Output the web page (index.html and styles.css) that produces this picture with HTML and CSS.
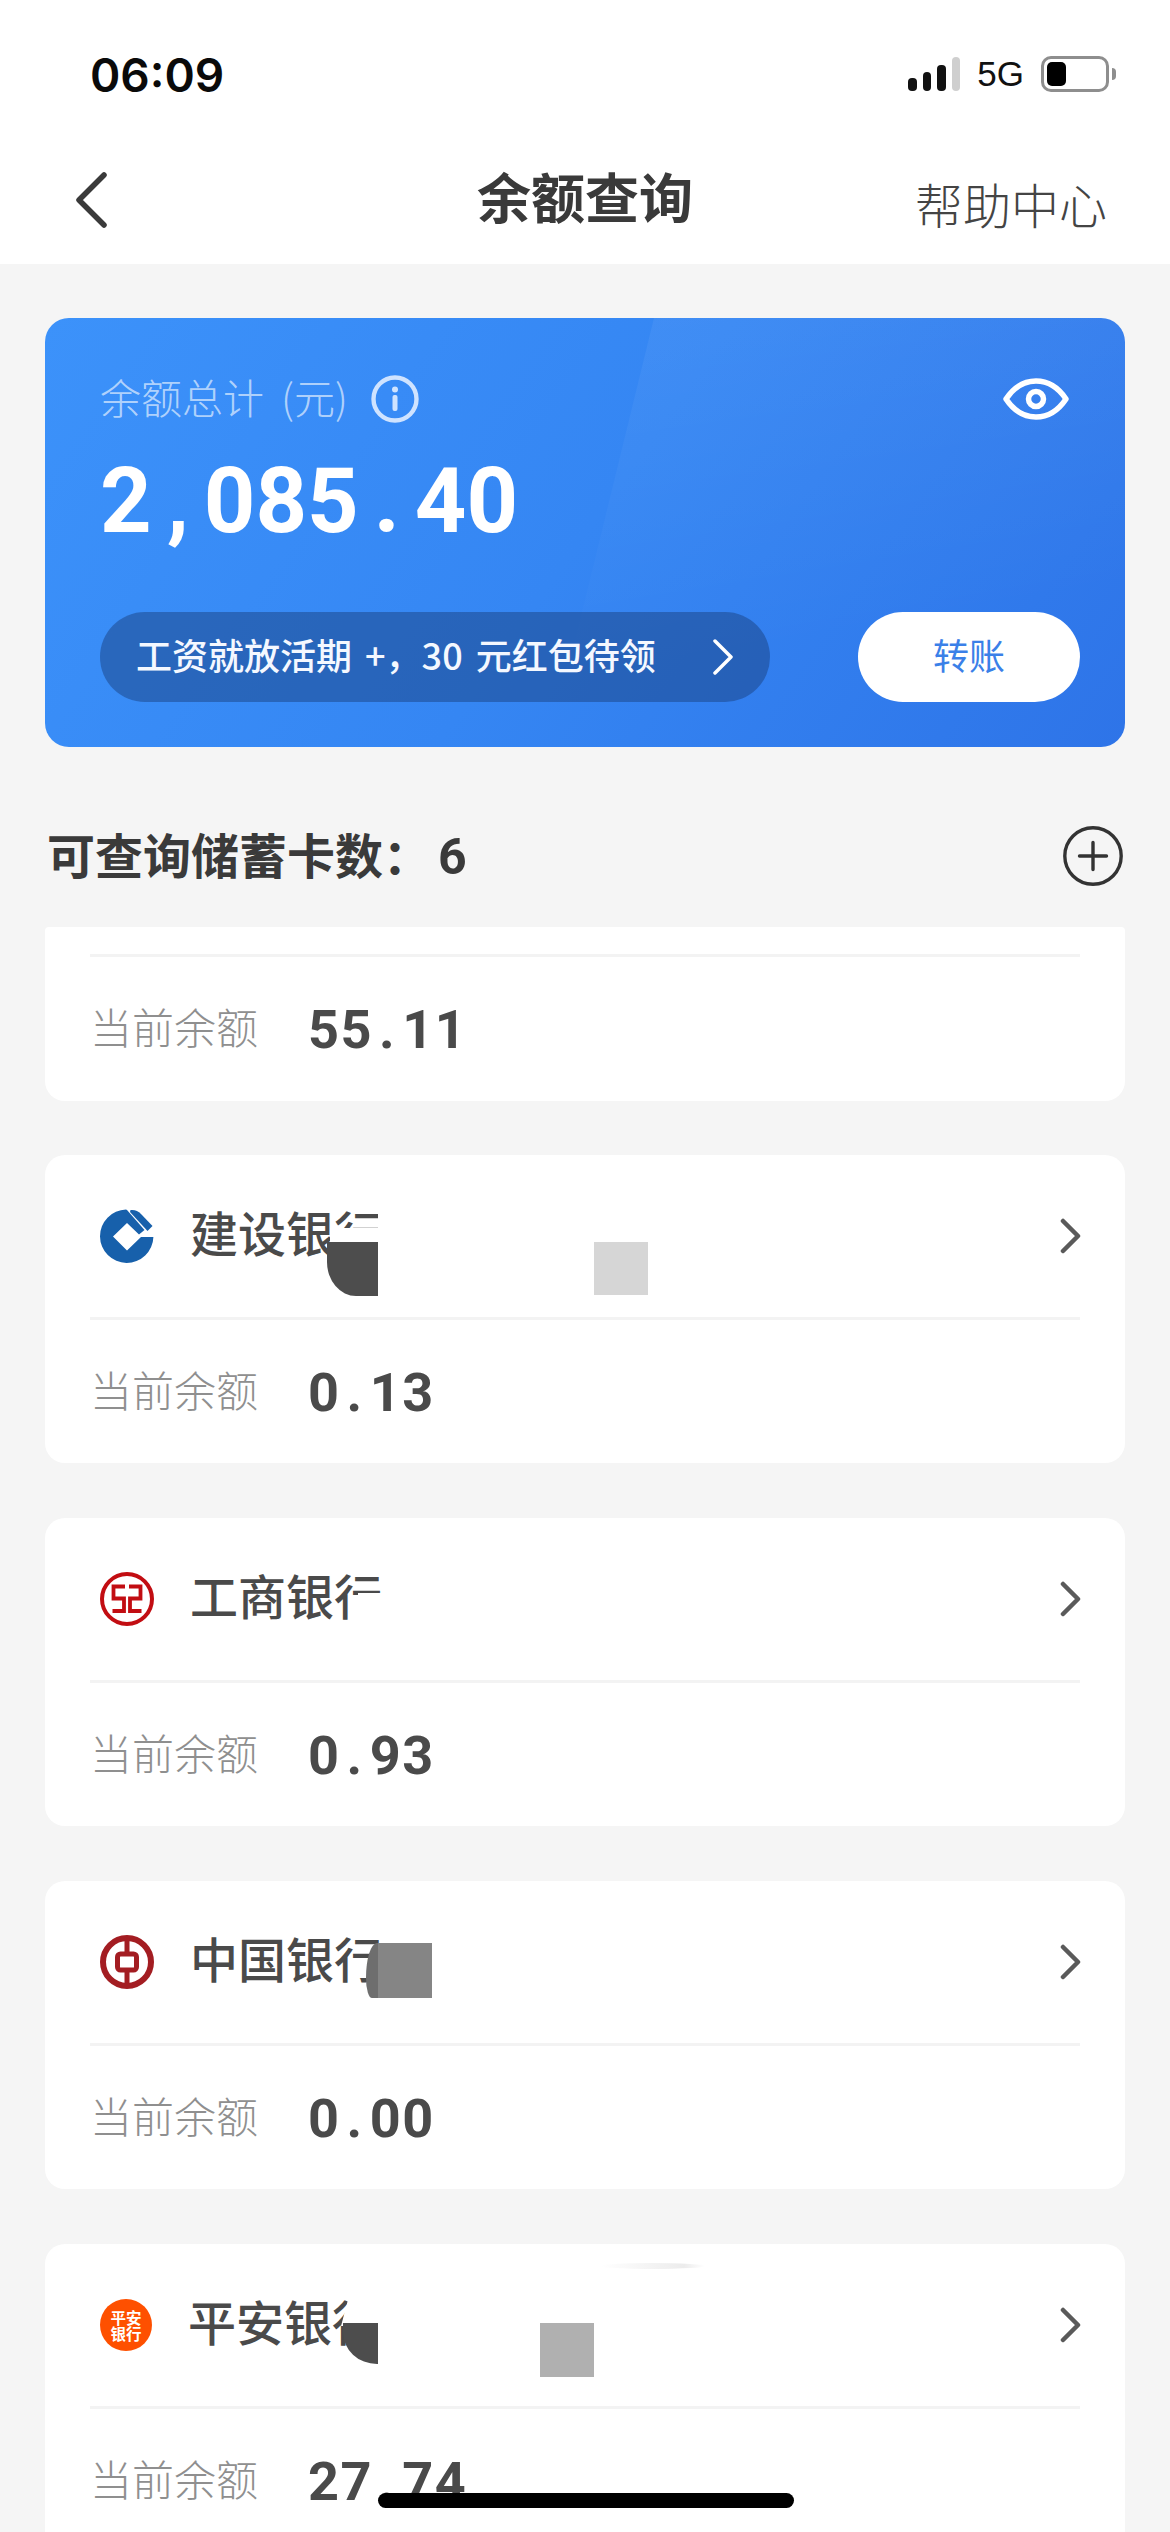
FILE: index.html
```html
<!DOCTYPE html>
<html lang="zh-CN">
<head>
<meta charset="utf-8">
<title>余额查询</title>
<link rel="stylesheet" href="styles.css">
</head>
<body>
<div class="phone">
  <header class="top">
    <div class="status">
      <span class="time">06:09</span>
      <div class="status-right">
        <div class="signal"><i class="b1"></i><i class="b2"></i><i class="b3"></i><i class="b4"></i></div>
        <span class="net">5G</span>
        <div class="battery"><div class="battery-fill"></div></div>
        <div class="battery-tip"></div>
      </div>
    </div>
    <nav class="nav">
      <svg class="back" width="34" height="56" viewBox="0 0 34 56"><path d="M30 3 L5 28 L30 53" fill="none" stroke="#3a3a3a" stroke-width="5.5" stroke-linecap="round" stroke-linejoin="round"/></svg>
      <h1 class="title">余额查询</h1>
      <span class="help">帮助中心</span>
    </nav>
  </header>

  <section class="hero">
    <div class="hero-sheen"></div>
    <div class="hero-top">
      <div class="hero-label">
        <span>余额总计 (元)</span>
        <svg width="48" height="48" viewBox="0 0 48 48"><circle cx="24" cy="24" r="21.5" fill="none" stroke="#cfe3ff" stroke-width="4.4"/><circle cx="24" cy="14.5" r="3" fill="#cfe3ff"/><rect x="21.5" y="20" width="5" height="16" rx="2" fill="#cfe3ff"/></svg>
      </div>
      <svg class="eye" width="66" height="42" viewBox="0 0 66 42"><path d="M3 21 C11 9 21 3 33 3 C45 3 55 9 63 21 C55 33 45 39 33 39 C21 39 11 33 3 21 Z" fill="none" stroke="#fff" stroke-width="5.5" stroke-linejoin="round"/><circle cx="33" cy="21" r="7.5" fill="none" stroke="#fff" stroke-width="5.5"/></svg>
    </div>
    <div class="amount">2<span class="pt">,</span>085<span class="pt">.</span>40</div>
    <div class="hero-actions">
      <div class="promo">
        <span class="promo-text">工资就放活期 +&#xFF0C;30 元红包待领</span>
        <svg width="22" height="36" viewBox="0 0 22 36"><path d="M3 2 L19 18 L3 34" fill="none" stroke="#fff" stroke-width="3.5" stroke-linecap="round" stroke-linejoin="round"/></svg>
      </div>
      <div class="transfer"><span>转账</span></div>
    </div>
  </section>

  <div class="section-head">
    <h2>可查询储蓄卡数&#xFF1A;<span class="count">6</span></h2>
    <svg width="60" height="60" viewBox="0 0 60 60"><circle cx="30" cy="30" r="28.2" fill="none" stroke="#333" stroke-width="3.4"/><path d="M30 16.5 V43.5 M16.5 30 H43.5" stroke="#333" stroke-width="3.4" stroke-linecap="round"/></svg>
  </div>

  <div class="list">
    <article class="card card-cut">
      <div class="rule"></div>
      <div class="balance"><span class="bal-label">当前余额</span><span class="bal-value">55<span class="pt">.</span>11</span></div>
    </article>

    <article class="card">
      <div class="card-head">
        <svg class="logo" width="54" height="54" viewBox="0 0 54 54"><path d="M26 .5 A26.7 26.7 0 1 0 53.4 28 H41 L27 41.5 L13 27.5 L27 14 L39 25.5 L44.5 21 L27 1 Z" fill="#1760ab"/><path d="M30.5 1 C35 .5 38 2 41 5 L52.5 17 L47.5 22 L30 3 Z" fill="#1760ab"/></svg>
        <span class="bank">建设银行</span>
        <svg class="more" width="22" height="36" viewBox="0 0 22 36"><path d="M3 3 L18 18 L3 33" fill="none" stroke="#5a5a5a" stroke-width="4.5" stroke-linecap="round" stroke-linejoin="round"/></svg>
        <i class="patch ccb-white"></i>
        <i class="patch ccb-white2"></i>
        <i class="patch ccb-dark"></i>
        <i class="patch ccb-gray"></i>
      </div>
      <div class="rule"></div>
      <div class="balance"><span class="bal-label">当前余额</span><span class="bal-value">0<span class="pt">.</span>13</span></div>
    </article>

    <article class="card">
      <div class="card-head">
        <svg class="logo" width="54" height="54" viewBox="0 0 54 54"><circle cx="27" cy="27" r="25" fill="none" stroke="#c20d12" stroke-width="4"/><path d="M25 14.5 H13.5 V26.5 H24 V39 H12.5 M29 14.5 H40.5 V26.5 H30 V39 H41.5" fill="none" stroke="#c20d12" stroke-width="3.8"/></svg>
        <span class="bank">工商银行</span>
        <svg class="more" width="22" height="36" viewBox="0 0 22 36"><path d="M3 3 L18 18 L3 33" fill="none" stroke="#5a5a5a" stroke-width="4.5" stroke-linecap="round" stroke-linejoin="round"/></svg>
        <i class="patch icbc-white"></i>
      </div>
      <div class="rule"></div>
      <div class="balance"><span class="bal-label">当前余额</span><span class="bal-value">0<span class="pt">.</span>93</span></div>
    </article>

    <article class="card">
      <div class="card-head">
        <svg class="logo" width="54" height="54" viewBox="0 0 54 54"><circle cx="27" cy="27" r="24" fill="none" stroke="#a31d22" stroke-width="6"/><rect x="17.5" y="19" width="19" height="16" rx="3" fill="none" stroke="#a31d22" stroke-width="5"/><path d="M27 3 V19 M27 35 V51" stroke="#a31d22" stroke-width="5"/></svg>
        <span class="bank">中国银行</span>
        <svg class="more" width="22" height="36" viewBox="0 0 22 36"><path d="M3 3 L18 18 L3 33" fill="none" stroke="#5a5a5a" stroke-width="4.5" stroke-linecap="round" stroke-linejoin="round"/></svg>
        <i class="patch boc-gray"></i>
      </div>
      <div class="rule"></div>
      <div class="balance"><span class="bal-label">当前余额</span><span class="bal-value">0<span class="pt">.</span>00</span></div>
    </article>

    <article class="card">
      <div class="card-head">
        <div class="logo pa-logo"><span>平安银行</span></div>
        <span class="bank">平安银行</span>
        <svg class="more" width="22" height="36" viewBox="0 0 22 36"><path d="M3 3 L18 18 L3 33" fill="none" stroke="#5a5a5a" stroke-width="4.5" stroke-linecap="round" stroke-linejoin="round"/></svg>
        <i class="patch pa-white"></i>
        <i class="patch pa-dark"></i>
        <i class="patch pa-gray"></i>
        <i class="patch pa-streak"></i>
      </div>
      <div class="rule"></div>
      <div class="balance"><span class="bal-label">当前余额</span><span class="bal-value">27<span class="pt">.</span>74</span></div>
    </article>
  </div>

  <div class="home-bar"></div>
</div>
</body>
</html>
```
FILE: styles.css
```css
* { box-sizing: border-box; }
html, body { margin: 0; padding: 0; }
body { font-family: "Noto Sans CJK SC", "Noto Sans", sans-serif; background: #f5f5f5; }
.phone { position: relative; width: 1170px; height: 2532px; overflow: hidden; background: #f5f5f5; }

.top { height: 264px; background: #fff; }
.status { height: 146px; padding: 50px 54px 0 90px; display: flex; justify-content: space-between; align-items: flex-start; }
.time { font-family: Inter, "Liberation Sans", sans-serif; font-size: 46px; font-weight: 600; line-height: 50px; color: #0a0a0a; }
.status-right { display: flex; align-items: center; height: 36px; margin-top: 6px; }
.signal { display: flex; align-items: flex-end; gap: 6px; height: 34px; }
.signal i { display: block; width: 8.5px; background: #111; border-radius: 4px; }
.signal .b1 { height: 13px; }
.signal .b2 { height: 19px; }
.signal .b3 { height: 26px; }
.signal .b4 { height: 34px; background: #cfcfcf; }
.net { font-family: "Liberation Sans", sans-serif; font-size: 35px; line-height: 36px; color: #111; margin: 0 17px 0 17px; }
.battery { width: 68px; height: 36px; border: 3px solid #8e8e8e; border-radius: 10px; padding: 3px; }
.battery-fill { width: 19px; height: 24px; background: #000; border-radius: 5px; }
.battery-tip { width: 4px; height: 12px; margin-left: 3px; background: #8e8e8e; border-radius: 0 6px 6px 0; }

.nav { position: relative; height: 118px; display: flex; align-items: center; justify-content: center; }
.back { position: absolute; left: 74px; top: 26px; }
.title { margin: 0 0 18px; font-size: 54px; font-weight: 700; line-height: 60px; color: #3a3a3a; }
.help { position: absolute; left: 915px; top: 27px; font-size: 48px; font-weight: 300; line-height: 60px; color: #444; }

.hero { position: relative; overflow: hidden; margin: 54px 45px 0; height: 429px; padding: 57px 55px 0 55px; border-radius: 24px; background: linear-gradient(125deg, #3c92fa 0%, #3586f3 50%, #2e74e8 100%); }
.hero-sheen { position: absolute; inset: 0; background: linear-gradient(170deg, rgba(255,255,255,.07), rgba(255,255,255,0) 75%); clip-path: polygon(609px 0, 100% 0, 100% 100%, 504px 100%); }
.hero-top { position: relative; display: flex; justify-content: space-between; align-items: center; height: 48px; }
.hero-label { display: flex; align-items: center; gap: 23px; font-size: 41px; font-weight: 300; line-height: 48px; word-spacing: 8px; color: rgba(255,255,255,.62); }
.hero-label span { margin-bottom: 6px; }
.hero-label svg { flex: none; }
.eye { margin-right: 1px; }
.amount { position: relative; margin-top: 39px; font-family: Roboto, "Liberation Sans", sans-serif; font-size: 90px; font-weight: 700; line-height: 80px; color: #fff; }
.amount .pt { margin: 0 15px; }
.hero-actions { position: absolute; left: 55px; right: 45px; top: 294px; display: flex; justify-content: space-between; }
.promo { width: 670px; height: 90px; padding: 0 36px; display: flex; align-items: center; justify-content: space-between; border-radius: 45px; background: rgba(25,65,130,.5); color: #f4f8ff; font-size: 36px; font-weight: 500; white-space: nowrap; }
.promo-text { margin-bottom: 6px; word-spacing: 5px; }
.transfer { width: 222px; height: 90px; display: flex; align-items: center; justify-content: center; border-radius: 45px; background: #fff; color: #3a80e8; font-size: 36px; font-weight: 400; }
.transfer span { margin-bottom: 6px; }

.section-head { margin: 78px 47px 0 47px; height: 62px; display: flex; justify-content: space-between; align-items: center; }
.section-head h2 { margin: 0 0 2px; font-size: 48px; font-weight: 700; line-height: 60px; color: #3a3a3a; }
.count { font-family: Roboto, "Liberation Sans", sans-serif; font-size: 50px; margin-left: 7px; }

.list { margin: 40px 45px 0; display: flex; flex-direction: column; gap: 55px; }
.card { background: #fff; border-radius: 20px; height: 308px; padding: 0 45px; }
.card-cut { height: 174px; margin-bottom: -1px; border-radius: 4px 4px 20px 20px; padding-top: 27px; }
.card-head { position: relative; height: 162px; margin: 0 -45px; padding: 0 45px; display: flex; align-items: center; }
.logo { flex: none; margin-left: 10px; }
.bank { margin-left: 36px; margin-top: -10px; font-size: 48px; font-weight: 500; line-height: 60px; color: #4a4a4a; }
.more { position: absolute; left: 1015px; top: 63px; }
.rule { height: 3px; background: #f3f3f3; }
.balance { display: flex; align-items: center; gap: 50px; padding: 46px 0 0; height: 100px; }
.bal-label { margin-bottom: 8px; font-size: 42px; font-weight: 300; line-height: 56px; color: #8f8f8f; }
.bal-value { font-family: Roboto, "Liberation Sans", sans-serif; font-size: 54px; font-weight: 700; line-height: 56px; letter-spacing: 1.5px; color: #4a4a4a; }
.bal-value .pt { margin: 0 6px; }

.patch { position: absolute; display: block; }
.ccb-white { left: 333px; top: 40px; width: 30px; height: 70px; background: #fff; }
.ccb-white2 { left: 285px; top: 73px; width: 50px; height: 16px; background: #fff; }
.ccb-dark { left: 282px; top: 87px; width: 51px; height: 54px; background: #4d4d4d; border-radius: 0 0 0 29px / 0 0 0 34px; }
.ccb-gray { left: 549px; top: 87px; width: 54px; height: 53px; background: #d6d6d6; }
.icbc-white { left: 313px; top: 75px; width: 60px; height: 38px; background: #fff; }
.boc-gray { left: 321px; top: 62px; width: 66px; height: 55px; background: linear-gradient(90deg, #6e6e6e 0, #6e6e6e 12px, #858585 12px); border-radius: 11px 0 0 6px / 35px 0 0 20px; }
.pa-white { left: 296px; top: 52px; width: 40px; height: 30px; background: #fff; clip-path: polygon(0 100%, 8px 0, 100% 0, 100% 100%); }
.pa-dark { left: 298px; top: 79px; width: 35px; height: 41px; background: #4d4d4d; border-radius: 0 0 0 34px / 0 0 0 32px; }
.pa-gray { left: 495px; top: 79px; width: 54px; height: 54px; background: #b0b0b0; }
.pa-streak { left: 555px; top: 19px; width: 105px; height: 6px; background: linear-gradient(90deg, rgba(235,235,235,0), #ececec 80%, rgba(235,235,235,0)); border-radius: 50%; }

.pa-logo { width: 52px; height: 52px; border-radius: 50%; background: #fe5000; color: #fff; display: flex; align-items: center; justify-content: center; font-size: 15.5px; font-weight: 700; line-height: 16px; }
.pa-logo span { display: block; width: 32px; text-align: center; }

.home-bar { position: absolute; left: 378px; top: 2493px; width: 416px; height: 15px; border-radius: 8px; background: #000; }
```
